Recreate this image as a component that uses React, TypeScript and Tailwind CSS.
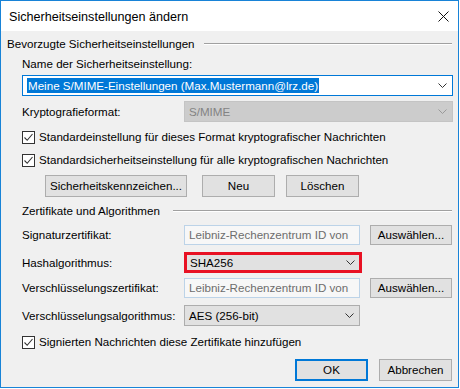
import React from "react";

const Chevron = ({ color = "#333" }: { color?: string }) => (
  <svg width="9" height="5" viewBox="0 0 9 5" className="shrink-0">
    <path d="M0.5 0.5 L4.5 4.5 L8.5 0.5" stroke={color} strokeWidth="1" fill="none" />
  </svg>
);

const Check = () => (
  <div className="w-[13px] h-[13px] border border-[#333] bg-white flex items-center justify-center shrink-0">
    <svg width="11" height="11" viewBox="0 0 11 11">
      <path d="M1.5 5.5 L4.2 8.3 L9.5 2" stroke="#333" strokeWidth="1.1" fill="none" />
    </svg>
  </div>
);

const Btn = ({ children, w, def }: { children: React.ReactNode; w: string; def?: boolean }) => (
  <div
    className={`${w} h-[22px] bg-[#e1e1e1] flex items-center justify-center ${
      def ? "border-2 border-[#0078d7]" : "border border-[#adadad]"
    }`}
  >
    {children}
  </div>
);

const Label = ({ children }: { children: React.ReactNode }) => (
  <div className="w-[162px] shrink-0">{children}</div>
);

export default function App() {
  return (
    <div className="w-[460px] h-[389px] bg-white font-['Liberation_Sans',Arial,sans-serif] text-[11.6px] text-black leading-[16px]">
      <div className="w-[459px] h-[388px] border border-[#1883d7] flex flex-col bg-[#f0f0f0]">
        {/* title bar */}
        <div className="h-[30px] bg-white flex items-center justify-between pl-[8px] pr-[9px] shrink-0">
          <span className="text-[12.6px] pt-[1px]">Sicherheitseinstellungen ändern</span>
          <svg width="11" height="11" viewBox="0 0 11 11">
            <path d="M0.5 0.5 L10.5 10.5 M10.5 0.5 L0.5 10.5" stroke="#111" strokeWidth="1" />
          </svg>
        </div>

        {/* group 1 */}
        <div className="mt-[5px] h-[16px] flex items-center pl-[6px] pr-[6px]">
          <span className="w-[197px] shrink-0 whitespace-nowrap">Bevorzugte Sicherheitseinstellungen</span>
          <div className="flex-1 h-[2px] border-t border-[#a0a0a0] border-b border-b-white" />
        </div>
        <div className="mt-[4px] h-[16px] pl-[21px]">Name der Sicherheitseinstellung:</div>
        <div className="mt-[3px] ml-[21px] w-[431px] h-[21px] border border-[#0078d7] bg-white flex items-center pl-[4px] pr-[5px]">
          <span className="bg-[#0078d7] text-white px-[1px] h-[15px] leading-[15px] whitespace-nowrap">
            Meine S/MIME-Einstellungen (Max.Mustermann@lrz.de)
          </span>
          <div className="flex-1" />
          <Chevron />
        </div>
        <div className="mt-[5px] h-[21px] pl-[21px] flex items-center">
          <Label>Kryptografieformat:</Label>
          <div className="w-[269px] h-[21px] bg-[#cccccc] border border-[#c4c4c4] flex items-center justify-between pl-[4px] pr-[5px] text-[#838383]">
            <span>S/MIME</span>
            <Chevron color="#999" />
          </div>
        </div>
        <div className="mt-[7px] h-[16px] pl-[21px] flex items-center gap-[4px] whitespace-nowrap">
          <Check />
          <span>Standardeinstellung für dieses Format kryptografischer Nachrichten</span>
        </div>
        <div className="mt-[7px] h-[16px] pl-[21px] flex items-center gap-[4px] whitespace-nowrap">
          <Check />
          <span>Standardsicherheitseinstellung für alle kryptografischen Nachrichten</span>
        </div>
        <div className="mt-[7px] pl-[44px] flex items-center whitespace-nowrap">
          <Btn w="w-[142px]">Sicherheitskennzeichen...</Btn>
          <div className="w-[15px]" />
          <Btn w="w-[73px]">Neu</Btn>
          <div className="w-[11px]" />
          <Btn w="w-[73px]">Löschen</Btn>
        </div>

        {/* group 2 */}
        <div className="mt-[6px] h-[16px] flex items-center pl-[21px] pr-[6px]">
          <span className="w-[151px] shrink-0 whitespace-nowrap">Zertifikate und Algorithmen</span>
          <div className="flex-1 h-[2px] border-t border-[#a0a0a0] border-b border-b-white" />
        </div>
        <div className="mt-[6px] h-[20px] pl-[21px] flex items-center whitespace-nowrap">
          <Label>Signaturzertifikat:</Label>
          <div className="w-[176px] h-[20px] border border-[#bcd3e8] bg-[#f7f7f7] flex items-center pl-[4px] text-[#6d6d6d]">
            Leibniz-Rechenzentrum ID von
          </div>
          <div className="w-[10px]" />
          <Btn w="w-[82px] !h-[20px]">Auswählen...</Btn>
        </div>
        <div className="mt-[7px] h-[21px] pl-[20px] flex items-center">
          <div className="w-[163px] shrink-0 pl-[1px]">Hashalgorithmus:</div>
          <div className="w-[178px] h-[21px] border-[3px] border-[#e81123] bg-[#e1e1e1] flex items-center justify-between pl-[3px] pr-[4px]">
            <span>SHA256</span>
            <Chevron />
          </div>
        </div>
        <div className="mt-[5px] h-[20px] pl-[21px] flex items-center whitespace-nowrap">
          <Label>Verschlüsselungszertifikat:</Label>
          <div className="w-[176px] h-[20px] border border-[#bcd3e8] bg-[#f7f7f7] flex items-center pl-[4px] text-[#6d6d6d]">
            Leibniz-Rechenzentrum ID von
          </div>
          <div className="w-[10px]" />
          <Btn w="w-[82px] !h-[20px]">Auswählen...</Btn>
        </div>
        <div className="mt-[7px] h-[21px] pl-[21px] flex items-center whitespace-nowrap">
          <Label>Verschlüsselungsalgorithmus:</Label>
          <div className="w-[176px] h-[21px] border border-[#adadad] bg-[#e1e1e1] flex items-center justify-between pl-[4px] pr-[5px]">
            <span>AES (256-bit)</span>
            <Chevron />
          </div>
        </div>
        <div className="mt-[8px] h-[16px] pl-[21px] flex items-center gap-[4px] whitespace-nowrap">
          <Check />
          <span>Signierten Nachrichten diese Zertifikate hinzufügen</span>
        </div>
        <div className="mt-[9px] flex justify-end pr-[6px]">
          <Btn w="w-[73px]" def>
            OK
          </Btn>
          <div className="w-[11px]" />
          <Btn w="w-[73px]">Abbrechen</Btn>
        </div>
      </div>
    </div>
  );
}
